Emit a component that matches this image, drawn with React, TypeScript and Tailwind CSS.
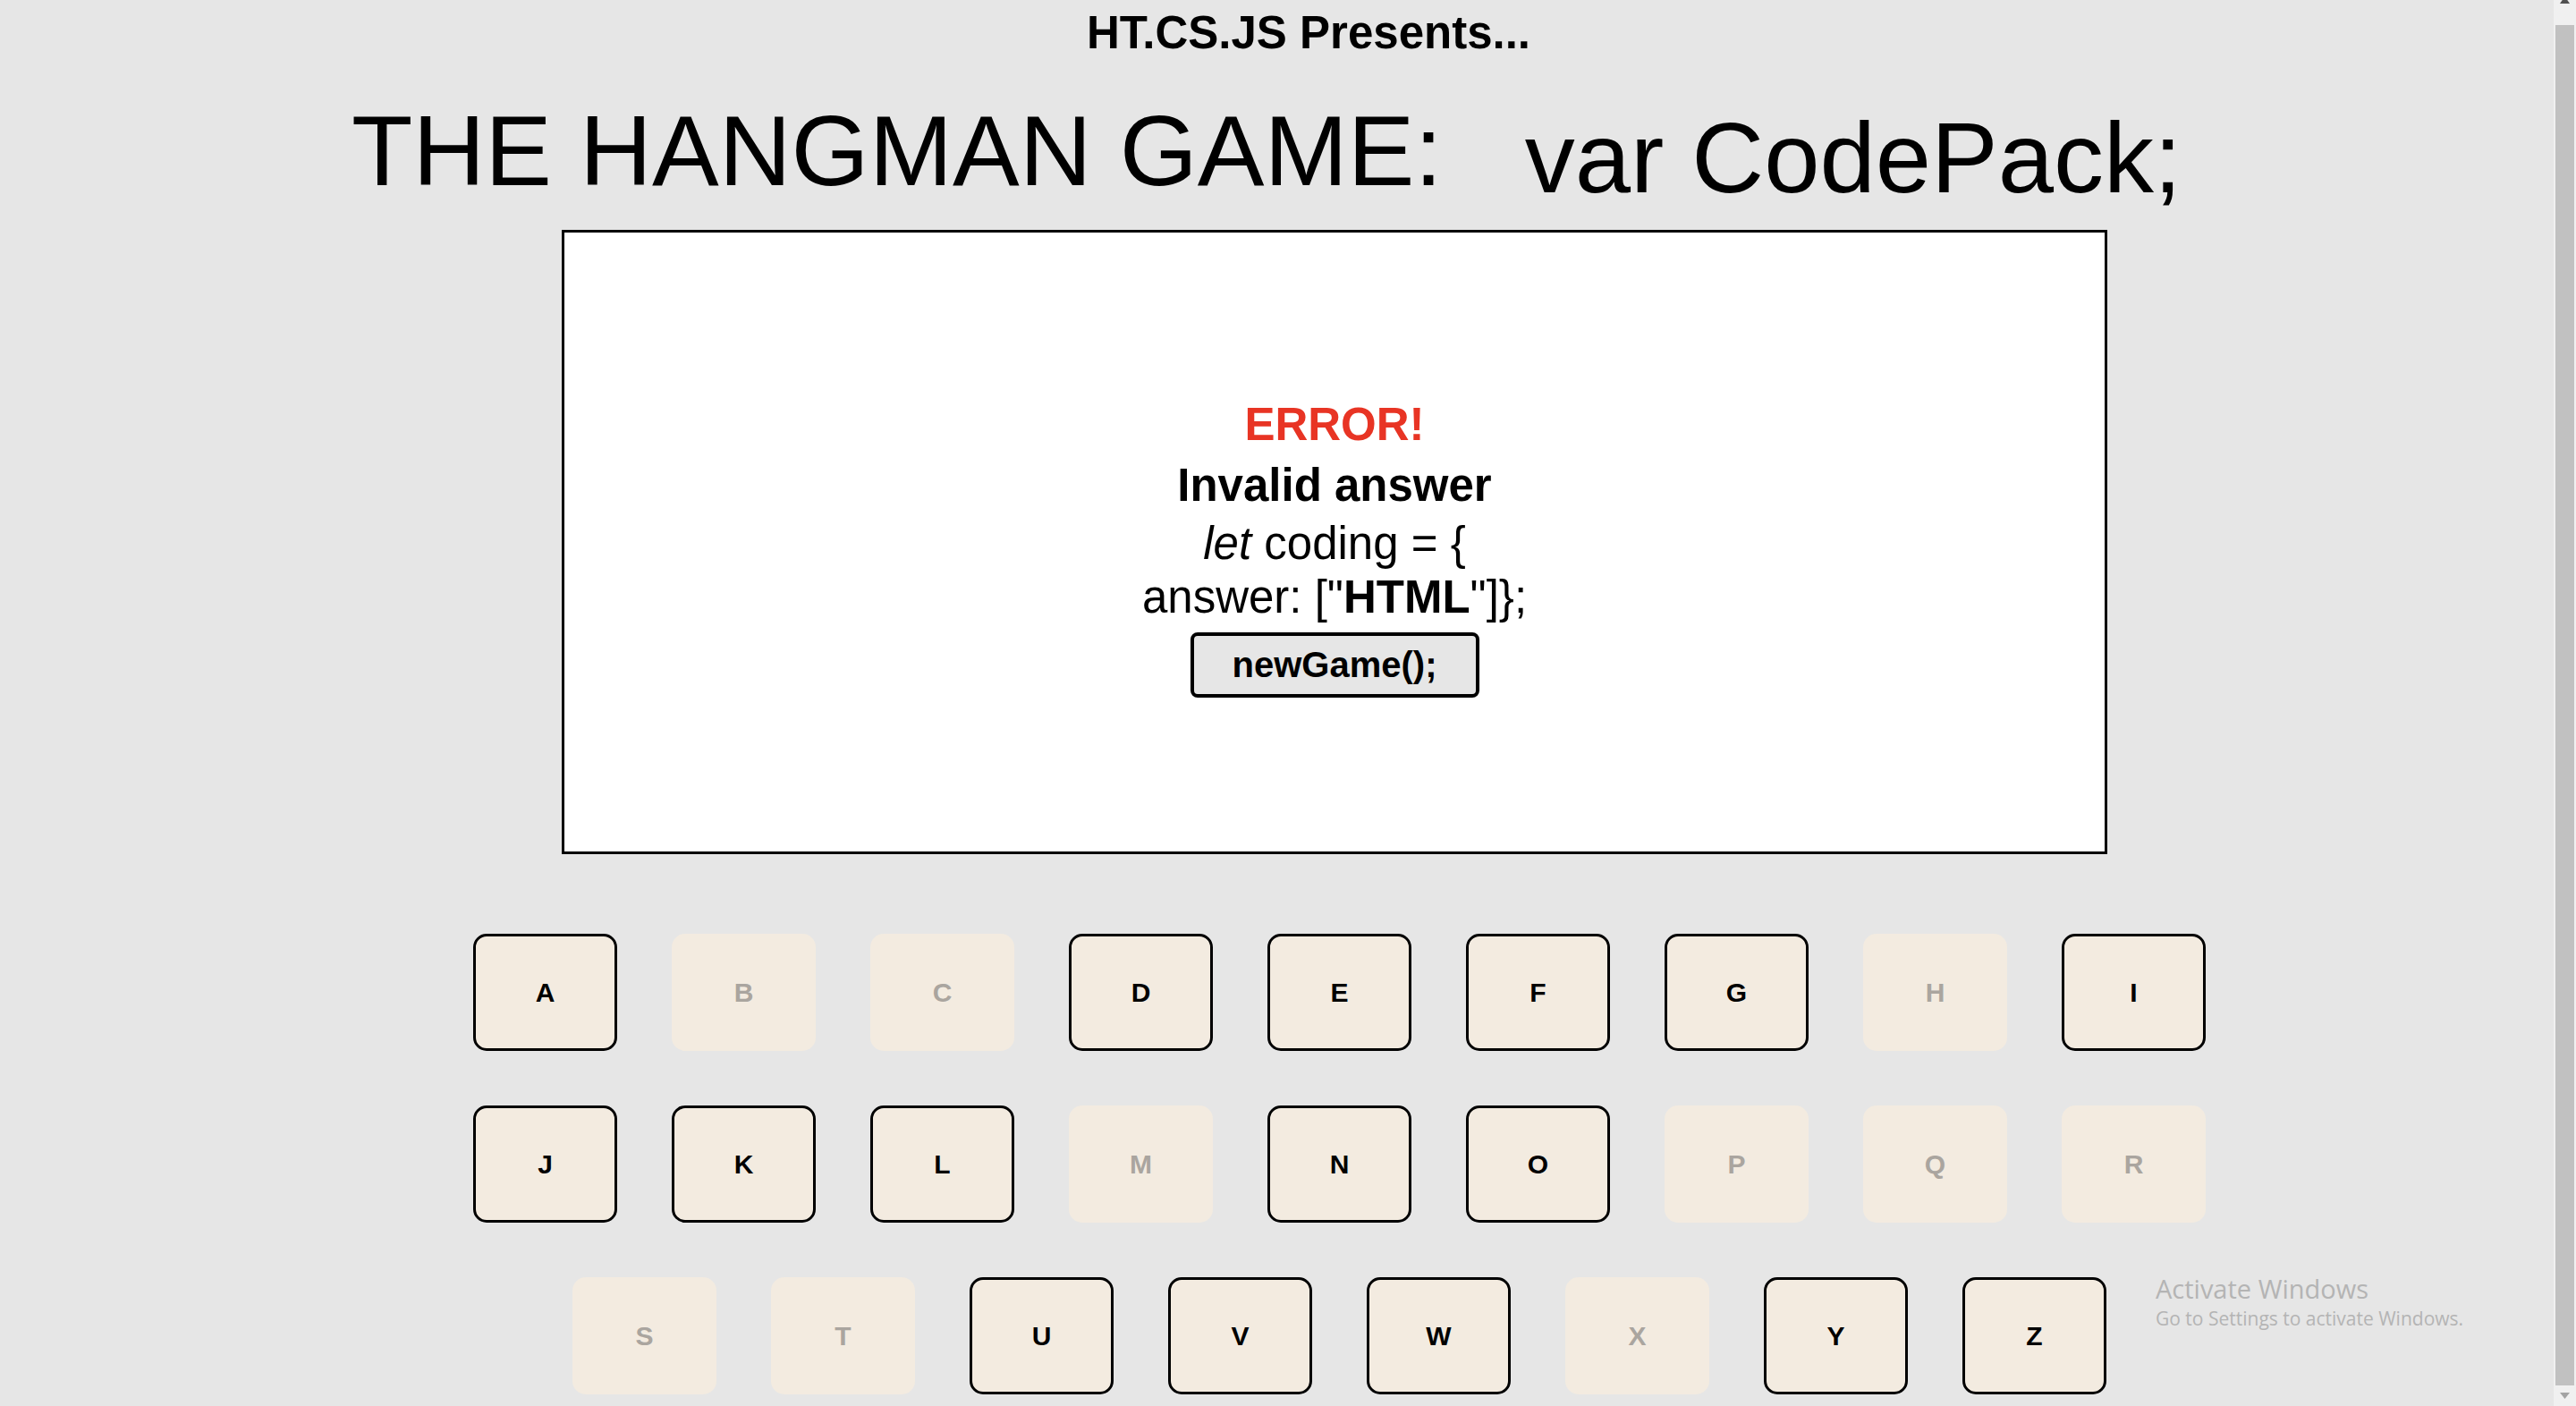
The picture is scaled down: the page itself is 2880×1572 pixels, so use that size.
import React from 'react';

const ROWS: { letter: string; used: boolean }[] = [
  { letter: 'A', used: false },
  { letter: 'B', used: true },
  { letter: 'C', used: true },
  { letter: 'D', used: false },
  { letter: 'E', used: false },
  { letter: 'F', used: false },
  { letter: 'G', used: false },
  { letter: 'H', used: true },
  { letter: 'I', used: false },
  { letter: 'J', used: false },
  { letter: 'K', used: false },
  { letter: 'L', used: false },
  { letter: 'M', used: true },
  { letter: 'N', used: false },
  { letter: 'O', used: false },
  { letter: 'P', used: true },
  { letter: 'Q', used: true },
  { letter: 'R', used: true },
  { letter: 'S', used: true },
  { letter: 'T', used: true },
  { letter: 'U', used: false },
  { letter: 'V', used: false },
  { letter: 'W', used: false },
  { letter: 'X', used: true },
  { letter: 'Y', used: false },
  { letter: 'Z', used: false },
];

const Key: React.FC<{ letter: string; used: boolean }> = ({ letter, used }) => (
  <button
    disabled={used}
    className={
      used
        ? 'w-[161px] h-[131px] rounded-[15px] border-[3px] border-transparent bg-[#f3ebe0] text-[30px] font-bold text-[#aaa59f] flex items-center justify-center'
        : 'w-[161px] h-[131px] rounded-[15px] border-[3px] border-black bg-[#f3ebe0] text-[30px] font-bold text-black flex items-center justify-center'
    }
  >
    {letter}
  </button>
);

const FakeScrollbar: React.FC = () => (
  <div className="w-[25px] h-full bg-[#f0f0f0] flex flex-col">
    {/* up arrow, mostly cut off at the top */}
    <div className="h-[28px] relative">
      <svg className="absolute left-[7px] top-[-4px]" width="11" height="8" viewBox="0 0 11 8">
        <polygon points="0,8 11,8 5.5,0" fill="#505050" />
      </svg>
    </div>
    <div className="flex-1 mx-[2px] bg-[#c1c1c1]" />
    <div className="h-[23px] relative">
      <svg className="absolute left-[7px] top-[8px]" width="11" height="7" viewBox="0 0 11 7">
        <polygon points="0,0 11,0 5.5,7" fill="#a3a3a3" />
      </svg>
    </div>
  </div>
);

export default function App() {
  return (
    <div className="flex w-full h-[1572px] overflow-hidden bg-[#e6e6e6] font-['Liberation_Sans',Arial,sans-serif] text-black">
      <main className="relative flex-1 flex flex-col">
        {/* header */}
        <div className="pt-[12px] pl-[71px] text-center text-[51px] leading-[50px] font-bold">
          HT.CS.JS Presents...
        </div>

        <h1 className="mt-[51px] ml-[393px] flex items-start font-normal">
          <span className="text-[112px] leading-[112px] whitespace-nowrap">THE HANGMAN GAME:</span>
          <span className="ml-[92px] mt-[8px] text-[112px] leading-[112px] whitespace-nowrap">var CodePack;</span>
        </h1>

        {/* game box */}
        <div className="mt-[24px] ml-[628px] w-[1728px] h-[698px] border-[3px] border-black bg-white flex flex-col items-center justify-center text-center">
          <div className="pt-[8px] flex flex-col items-center">
            <div className="text-[51px] leading-[67px] font-bold text-[#e83424]">ERROR!</div>
            <div className="text-[51px] leading-[70px] font-bold">Invalid answer</div>
            <p className="text-[51px] leading-[60px]">
              <em>let</em> coding = {'{'}
              <br />
              answer: [&quot;<strong>HTML</strong>&quot;]{'}'};
            </p>
            <button className="mt-[9px] w-[323px] h-[73px] rounded-[8px] border-[4px] border-black bg-[#e6e6e6] text-[40px] font-bold flex items-center justify-center">
              newGame();
            </button>
          </div>
        </div>

        {/* letters */}
        <div className="mt-[89px] ml-[529px] w-[1937px] flex flex-wrap justify-center gap-x-[61px] gap-y-[61px]">
          {ROWS.map((k) => (
            <Key key={k.letter} letter={k.letter} used={k.used} />
          ))}
        </div>

        {/* windows watermark */}
        <div className="absolute left-[2410px] top-[1426px] text-[#b4b4b4] font-['Open_Sans','Noto_Sans',sans-serif]">
          <div className="text-[29px] leading-[29px]">Activate Windows</div>
          <div className="mt-[9px] text-[21px] leading-[21px]">Go to Settings to activate Windows.</div>
        </div>
      </main>
      <FakeScrollbar />
    </div>
  );
}
